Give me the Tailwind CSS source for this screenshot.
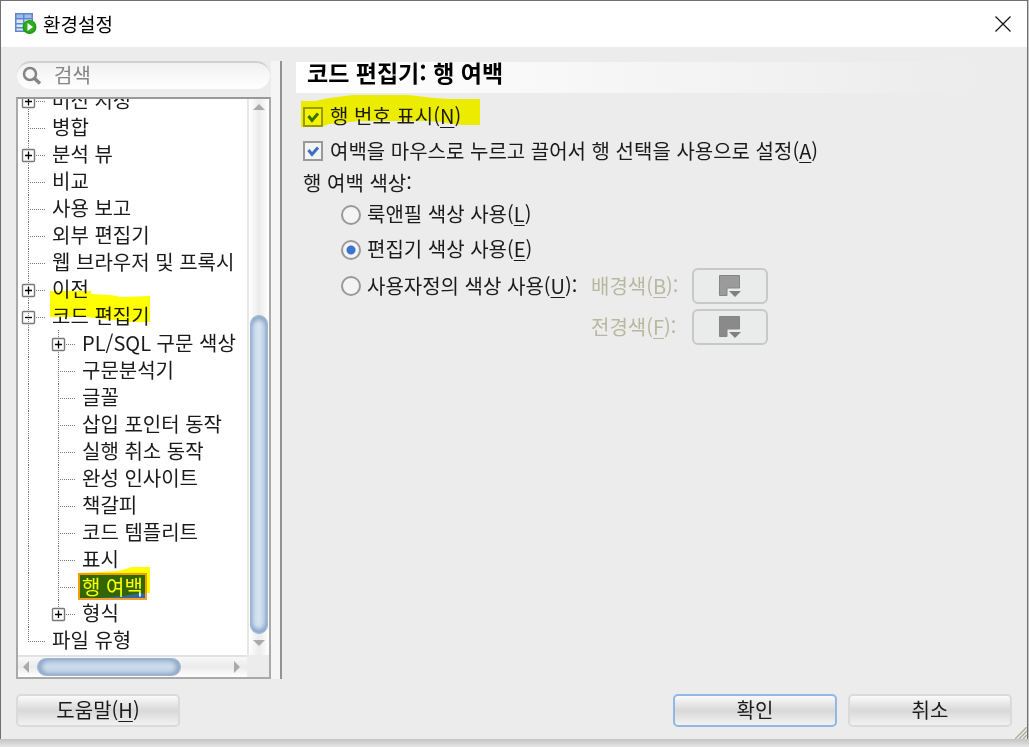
<!DOCTYPE html>
<html lang="ko">
<head>
<meta charset="utf-8">
<title>환경설정</title>
<script src="https://cdn.jsdelivr.net/npm/@tailwindcss/browser@4"></script>
</head>
<body class="min-h-screen flex flex-col bg-linear-to-t from-[#e6e6e6] to-[#c4c4c4] to-[8px] pb-2 pr-px text-xl leading-[27px] text-[#1a1a1a] font-['Noto_Sans_CJK_KR','Noto_Sans',sans-serif]">

<!-- Tree guide symbols -->
<svg class="hidden" aria-hidden="true">
  <defs>
    <linearGradient id="box" x1="0" y1="0" x2="0" y2="1"><stop offset="0" stop-color="#fff"/><stop offset="1" stop-color="#cfc8bb"/></linearGradient>
    <symbol id="line" viewBox="0 0 30 27"><path d="M10.500 0V27" stroke="#777" stroke-dasharray="1 1"/></symbol>
    <symbol id="tee" viewBox="0 0 30 27"><path d="M10.500 0V27M12 14.500H28" stroke="#777" stroke-dasharray="1 1"/></symbol>
    <symbol id="elbow" viewBox="0 0 30 27"><path d="M10.500 0V15M12 14.500H28" stroke="#777" stroke-dasharray="1 1"/></symbol>
    <symbol id="plus" viewBox="0 0 30 27"><path d="M10.500 0V27M18 14.500H28" stroke="#777" stroke-dasharray="1 1"/><rect x="4.500" y="8.500" width="12" height="12" rx="1" fill="url(#box)" stroke="#777" stroke-width="1.400"/><path d="M7 14.500H14M10.500 11V18" stroke="#000" stroke-width="1.300"/></symbol>
    <symbol id="plusend" viewBox="0 0 30 27"><path d="M10.500 0V15M18 14.500H28" stroke="#777" stroke-dasharray="1 1"/><rect x="4.500" y="8.500" width="12" height="12" rx="1" fill="url(#box)" stroke="#777" stroke-width="1.400"/><path d="M7 14.500H14M10.500 11V18" stroke="#000" stroke-width="1.300"/></symbol>
    <symbol id="minus" viewBox="0 0 30 27"><path d="M10.500 0V27M18 14.500H28" stroke="#777" stroke-dasharray="1 1"/><rect x="4.500" y="8.500" width="12" height="12" rx="1" fill="url(#box)" stroke="#777" stroke-width="1.400"/><path d="M7 14.500H14" stroke="#000" stroke-width="1.300"/></symbol>
  </defs>
</svg>

<div class="flex-1 flex flex-col border border-b-0 border-[#6f6f6f] bg-[#ececec]">
  <header class="flex items-center h-[46px] bg-white pl-3 pr-4 text-black">
    <svg class="w-6 h-6 mr-[6px]" viewBox="0 0 24 24" aria-hidden="true">
      <rect x="2" y="1" width="18" height="19" fill="#5f86cc"/>
      <path d="M3.500 2.500H10V6H3.500ZM11.500 2.500H18.500V6H11.500Z" fill="#9dbcea"/>
      <path d="M3.500 7.500H10V11H3.500ZM11.500 7.500H18.500V11H11.500ZM3.500 12.500H10V15H3.500ZM3.500 16.500H10V18.500H3.500Z" fill="#d9e7fb"/>
      <circle cx="16.500" cy="15" r="7" fill="#1f9a12"/><circle cx="16.500" cy="14.500" r="5.500" fill="#2fae1c"/>
      <path d="M14.500 11L20 15L14.500 19Z" fill="#fff"/>
    </svg>
    <h1 class="text-[19px] leading-[29px] pb-[2px]">환경설정</h1>
    <button class="ml-auto w-4 h-4" aria-label="닫기"><svg viewBox="0 0 16 16"><path d="M.5 .5L15.500 15.500M15.500 .5L.5 15.500" stroke="#111" stroke-width="1.200"/></svg></button>
  </header>

  <div class="flex-1 flex flex-col px-[15px] pt-[14px] pb-3">
    <main class="flex-1 flex">
      <section class="flex flex-col w-[255px] shrink-0">
        <label class="flex items-center h-7 mb-2 mx-px rounded-full border-t-2 border-[#d0d0d0] bg-linear-to-b from-[#f1f1f1] to-white pl-[5px]">
          <svg class="w-5 h-5 shrink-0" viewBox="0 0 20 20" fill="none" stroke="#858585" aria-hidden="true"><circle cx="8" cy="8" r="6" stroke-width="2.500"/><path d="M12.500 12.500L18 17.500" stroke-width="3.500"/></svg>
          <input type="text" placeholder="검색" aria-label="검색" class="min-w-0 flex-1 ml-3 mb-1 h-6 bg-transparent outline-none placeholder:text-[#858585]">
        </label>

        <div class="flex-1 flex flex-col border-2 border-[#a9a9a9] border-t-[#999] bg-white">
          <div class="flex-1 flex">
            <ul class="flex-1 min-w-0 overflow-hidden whitespace-nowrap leading-[25px] [&>li]:flex [&>li]:h-[27px] [&>li:first-child]:-mt-3 [&>li>svg]:w-[30px] [&>li>svg]:h-[27px] [&>li>svg]:shrink-0 [&>li>span]:ml-1">
              <li><svg><use href="#plus"/></svg><span>버전 지정</span></li>
              <li><svg><use href="#tee"/></svg><span>병합</span></li>
              <li><svg><use href="#plus"/></svg><span>분석 뷰</span></li>
              <li><svg><use href="#tee"/></svg><span>비교</span></li>
              <li><svg><use href="#tee"/></svg><span>사용 보고</span></li>
              <li><svg><use href="#tee"/></svg><span>외부 편집기</span></li>
              <li><svg><use href="#tee"/></svg><span>웹 브라우저 및 프록시</span></li>
              <li><svg><use href="#plus"/></svg><span>이전</span></li>
              <li><svg><use href="#minus"/></svg><span class="relative">코드 편집기
                <svg class="absolute -left-[2px] -top-3 w-[100px] h-8 mix-blend-multiply" viewBox="0 0 100 32" aria-hidden="true"><path d="M0 0H41V3L60 4L72 6L100 5V31H78L63 29L36 26H0Z" fill="#ff0"/></svg></span></li>
              <li><svg><use href="#line"/></svg><svg><use href="#plus"/></svg><span>PL/SQL 구문 색상</span></li>
              <li><svg><use href="#line"/></svg><svg><use href="#tee"/></svg><span>구문분석기</span></li>
              <li><svg><use href="#line"/></svg><svg><use href="#tee"/></svg><span>글꼴</span></li>
              <li><svg><use href="#line"/></svg><svg><use href="#tee"/></svg><span>삽입 포인터 동작</span></li>
              <li><svg><use href="#line"/></svg><svg><use href="#tee"/></svg><span>실행 취소 동작</span></li>
              <li><svg><use href="#line"/></svg><svg><use href="#tee"/></svg><span>완성 인사이트</span></li>
              <li><svg><use href="#line"/></svg><svg><use href="#tee"/></svg><span>책갈피</span></li>
              <li><svg><use href="#line"/></svg><svg><use href="#tee"/></svg><span>코드 템플리트</span></li>
              <li><svg><use href="#line"/></svg><svg><use href="#tee"/></svg><span>표시</span></li>
              <li><svg><use href="#line"/></svg><svg><use href="#tee"/></svg><div class="relative w-[69px] h-[27px] leading-[23px] border-2 border-[#f0a030] bg-[#336699] text-white pl-[2px]">행 여백
                <svg class="absolute -left-[2px] -top-[8px] w-[72px] h-[32px] mix-blend-multiply" viewBox="0 0 72 32" aria-hidden="true"><path d="M0 6L40 4L54 0H72V26H62L46 29L20 31H0Z" fill="#ff0"/></svg></div></li>
              <li><svg><use href="#line"/></svg><svg><use href="#plusend"/></svg><span>형식</span></li>
              <li><svg><use href="#elbow"/></svg><span>파일 유형</span></li>
            </ul>
            <div class="flex flex-col items-center w-[22px] shrink-0 border-l-2 border-[#e6e6e6] bg-linear-to-r from-white via-[#ebebeb] to-white pt-[5px] pb-[9px]">
              <svg class="w-3 h-[6px]" viewBox="0 0 12 6"><path d="M0 6L6 0L12 6Z" fill="#aaa"/></svg>
              <div class="w-[18px] h-[319px] mt-auto mb-[6px] rounded-full border border-[#9db4d0] bg-linear-to-r from-[#c3d6ea] via-[#d7e4f0] to-[#b4cae2] shadow-[inset_0_4px_4px_#8ea9ca,inset_0_-4px_4px_#8ea9ca]"></div>
              <svg class="w-3 h-[6px]" viewBox="0 0 12 6"><path d="M0 0L6 6L12 0Z" fill="#aaa"/></svg>
            </div>
          </div>
          <div class="flex h-[22px] bg-[#ececec]">
            <div class="flex-1 flex items-center border-t-2 border-[#e2e2e2] bg-linear-to-b from-[#f8f8f8] via-[#ebebeb] to-white pl-[5px] pr-[7px]">
              <svg class="w-[6px] h-3" viewBox="0 0 6 12"><path d="M6 0L0 6L6 12Z" fill="#aaa"/></svg>
              <div class="w-[144px] h-[18px] ml-2 rounded-full border border-[#9db4d0] bg-linear-to-b from-[#b4cae2] via-[#cddceb] to-[#b4cae2] shadow-[inset_4px_0_4px_#8ea9ca,inset_-4px_0_4px_#8ea9ca]"></div>
              <svg class="w-[6px] h-3 ml-auto" viewBox="0 0 6 12"><path d="M0 0L6 6L0 12Z" fill="#aaa"/></svg>
            </div>
            <div class="w-[22px]"></div>
          </div>
        </div>
      </section>

      <div class="w-[11px] shrink-0 border-r-2 border-[#929292] bg-[#f5f5f5]"></div>

      <section class="flex-1 min-w-0 pl-[14px]">
        <h2 class="h-[31px] mt-px pl-[11px] leading-[21px] text-[23px] font-bold text-black bg-linear-to-r from-white to-[#ececec] to-95%">코드 편집기: 행 여백</h2>
        <div class="pl-[7px] pt-[8px]">
          <div class="relative flex h-[30px]">
            <label class="flex items-center gap-[7px]">
              <span class="grid mt-[2px]"><input type="checkbox" checked class="col-start-1 row-start-1 appearance-none w-5 h-5 border-2 border-[#999] bg-[#f4f4f4]"><svg class="col-start-1 row-start-1 w-5 h-5 pointer-events-none" viewBox="0 0 20 20"><path d="M5.500 9L9 13.500L15 6.500" fill="none" stroke="#3b6fc6" stroke-width="3"/></svg></span>
              <span class="pb-[2px]">행 번호 표시(<u class="decoration-1 underline-offset-3">N</u>)</span>
            </label>
            <svg class="absolute -left-[2px] -top-[6px] w-[179px] h-8 mix-blend-multiply pointer-events-none" viewBox="0 0 179 32" aria-hidden="true"><path d="M0 6H14L28 3L52 0H107L133 3L150 4H179V30H160L147 28L130 26H60L28 29L20 32H0Z" fill="#ff0"/></svg>
          </div>
          <label class="flex items-center gap-[7px] h-[38px]">
            <span class="grid mt-[2px]"><input type="checkbox" checked class="col-start-1 row-start-1 appearance-none w-5 h-5 border-2 border-[#999] bg-[#f4f4f4]"><svg class="col-start-1 row-start-1 w-5 h-5 pointer-events-none" viewBox="0 0 20 20"><path d="M5.500 9L9 13.500L15 6.500" fill="none" stroke="#3b6fc6" stroke-width="3"/></svg></span>
            <span>여백을 마우스로 누르고 끌어서 행 선택을 사용으로 설정(<u class="decoration-1 underline-offset-3">A</u>)</span>
          </label>
          <fieldset class="flex flex-col">
            <legend class="h-[27px]">행 여백 색상:</legend>
            <div class="flex flex-col pl-[38px]">
              <label class="flex items-center gap-[6px] h-[35px]"><input type="radio" name="gutter" class="appearance-none w-5 h-5 mt-[2px] rounded-full border-2 border-[#999] bg-[#f4f4f4]"><span>룩앤필 색상 사용(<u class="decoration-1 underline-offset-3">L</u>)</span></label>
              <label class="flex items-center gap-[6px] h-[35px]"><input type="radio" name="gutter" checked class="appearance-none w-5 h-5 mt-[2px] rounded-full border-2 border-[#999] bg-[#f4f4f4] bg-radial from-[#3b74d0] from-[4px] to-[#f4f4f4] to-[5px]"><span>편집기 색상 사용(<u class="decoration-1 underline-offset-3">E</u>)</span></label>
              <div class="grid grid-cols-[250px_101px_76px] items-center gap-y-[5px] pt-[2px]">
                <label class="flex items-center gap-[6px]"><input type="radio" name="gutter" class="appearance-none w-5 h-5 rounded-full border-2 border-[#999] bg-[#f4f4f4]"><span class="pb-[2px]">사용자정의 색상 사용(<u class="decoration-1 underline-offset-3">U</u>):</span></label>
                <label for="bg" class="pb-[2px] text-[#b8b8a0]">배경색(<u class="decoration-1 underline-offset-3">B</u>):</label>
                <button id="bg" disabled class="grid place-items-center h-9 rounded-md border-2 border-[#c8c8c8] bg-[#eaecec]"><svg class="w-6 h-6" viewBox="0 0 24 24"><path d="M1.500 1.500H21.500V14H9V21.500H1.500Z" fill="#9b9b9b" stroke="#858585"/><path d="M11 17H23L17 23Z" fill="#808080"/></svg></button>
                <label for="fg" class="col-start-2 pb-[2px] text-[#b8b8a0]">전경색(<u class="decoration-1 underline-offset-3">F</u>):</label>
                <button id="fg" disabled class="grid place-items-center h-9 rounded-md border-2 border-[#c8c8c8] bg-[#eaecec]"><svg class="w-6 h-6" viewBox="0 0 24 24"><path d="M1.500 1.500H21.500V14H9V21.500H1.500Z" fill="#8a8a8a" stroke="#858585"/><path d="M11 17H23L17 23Z" fill="#808080"/></svg></button>
              </div>
            </div>
          </fieldset>
        </div>
      </section>
    </main>

    <footer class="relative flex gap-[11px] pt-[15px]">
      <button class="w-[164px] h-[33px] pb-[6px] mr-auto rounded-[5px] border-2 border-[#dadada] bg-linear-to-b from-[#fafafa] from-0% via-[#d8d8d8] via-50% to-[#f2f2f2]">도움말(<u class="decoration-1 underline-offset-3">H</u>)</button>
      <button class="w-[164px] h-[33px] pb-[6px] rounded-[5px] border-2 border-[#8fb8e4] bg-linear-to-b from-[#fafafa] via-[#d8d8d8] via-50% to-[#f2f2f2]">확인</button>
      <button class="w-[164px] h-[33px] pb-[6px] rounded-[5px] border-2 border-[#dadada] bg-linear-to-b from-[#fafafa] via-[#d8d8d8] via-50% to-[#f2f2f2]">취소</button>
      <svg class="absolute -right-[15px] -bottom-3 w-3 h-3" viewBox="0 0 12 12" aria-hidden="true"><path d="M0 12L12 0M4 12L12 4M8 12L12 8" stroke="#b0b09a" stroke-width="1.500"/></svg>
    </footer>
  </div>
</div>
</body>
</html>
